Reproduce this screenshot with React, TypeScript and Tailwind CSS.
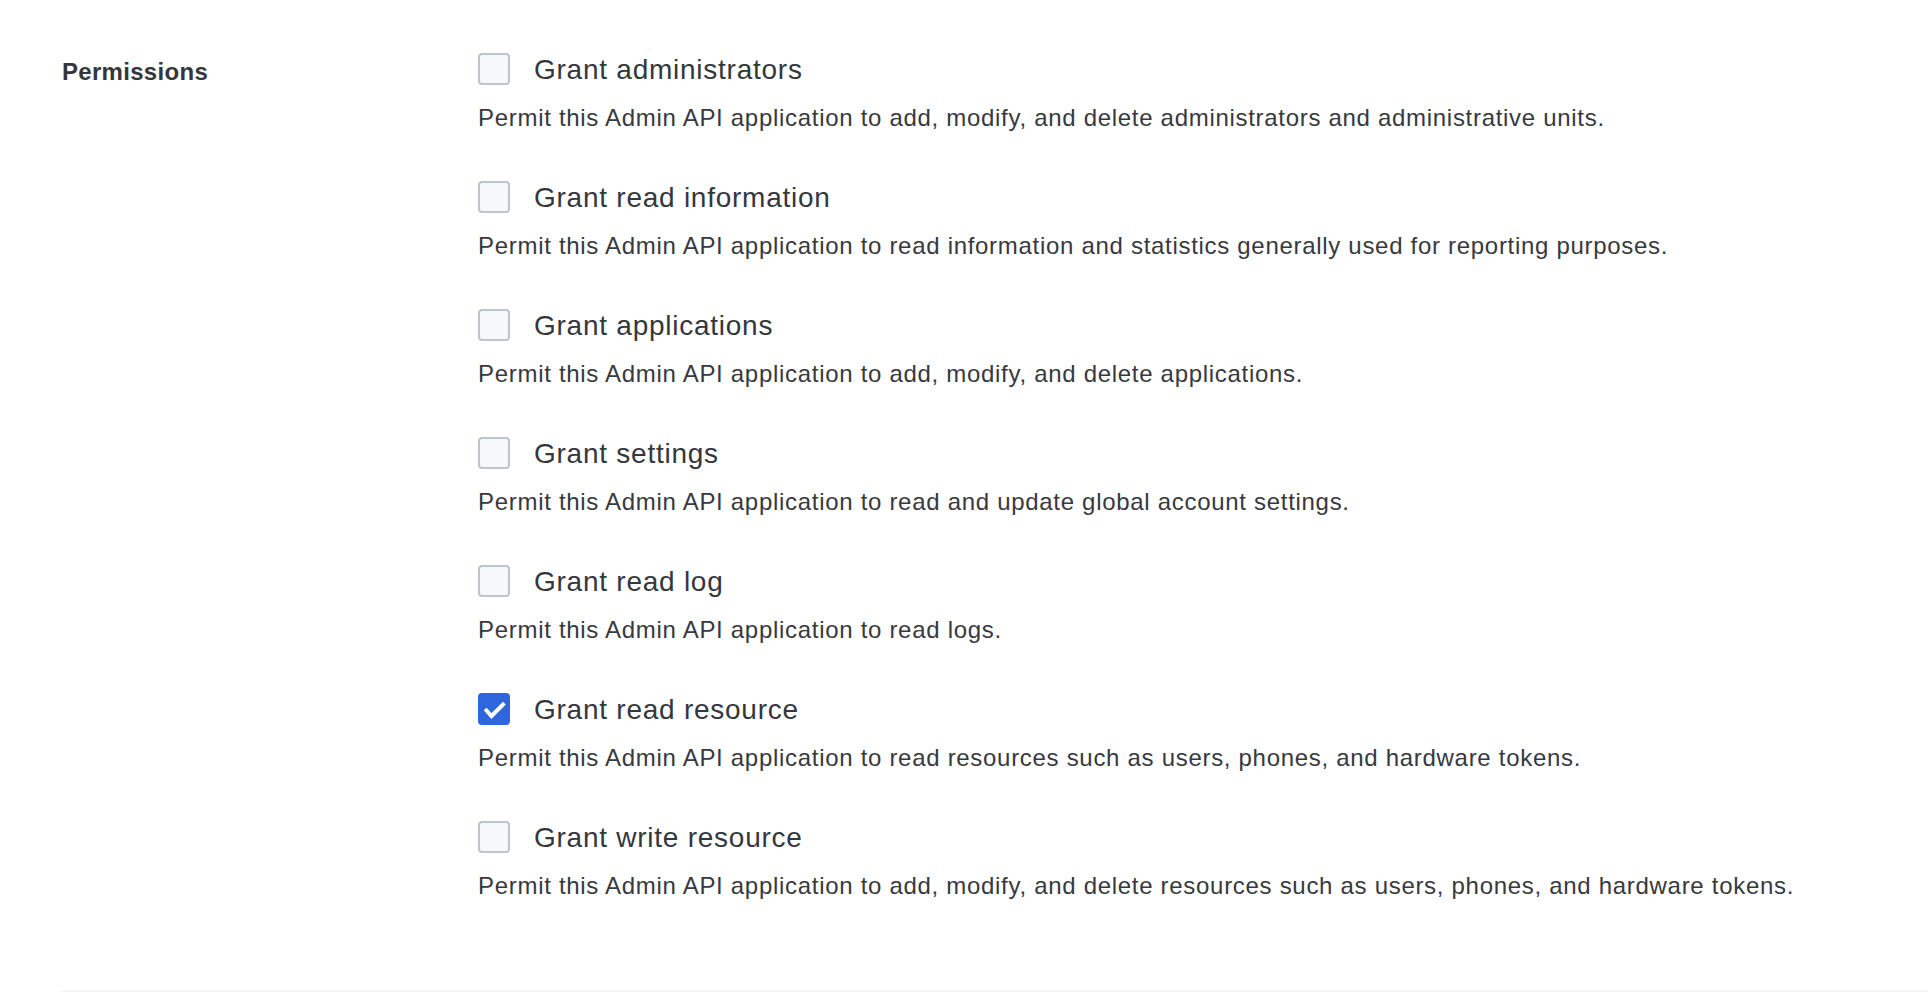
const permissions = [
  {
    label: 'Grant administrators',
    desc: 'Permit this Admin API application to add, modify, and delete administrators and administrative units.',
    checked: false,
  },
  {
    label: 'Grant read information',
    desc: 'Permit this Admin API application to read information and statistics generally used for reporting purposes.',
    checked: false,
  },
  {
    label: 'Grant applications',
    desc: 'Permit this Admin API application to add, modify, and delete applications.',
    checked: false,
  },
  {
    label: 'Grant settings',
    desc: 'Permit this Admin API application to read and update global account settings.',
    checked: false,
  },
  {
    label: 'Grant read log',
    desc: 'Permit this Admin API application to read logs.',
    checked: false,
  },
  {
    label: 'Grant read resource',
    desc: 'Permit this Admin API application to read resources such as users, phones, and hardware tokens.',
    checked: true,
  },
  {
    label: 'Grant write resource',
    desc: 'Permit this Admin API application to add, modify, and delete resources such as users, phones, and hardware tokens.',
    checked: false,
  },
]

function Checkbox({ checked }: { checked: boolean }) {
  if (checked) {
    return (
      <span className="block h-8 w-8 shrink-0 rounded-[4px] bg-[#2d66dd]">
        <svg width="32" height="32" viewBox="0 0 32 32" fill="none" stroke="#ffffff" strokeWidth="4" strokeLinecap="square" strokeLinejoin="miter">
          <path d="M8.5 17.5l5 5.5L25 11.5" />
        </svg>
      </span>
    )
  }
  return <span className="block h-8 w-8 shrink-0 rounded-[4px] border-2 border-[#bcc5cf] bg-[#f6f8fa]" />
}

export default function App() {
  return (
    <div className="min-h-[996px] bg-white pl-[62px] pt-[53px] text-[#34373c]" style={{ fontFamily: '"Liberation Sans", Arial, sans-serif' }}>
      <div className="flex">
        <div className="mt-[3px] w-[416px] shrink-0 text-[24px] font-bold leading-8 tracking-[0.3px] text-[#33373b]">Permissions</div>
        <div className="flex flex-col gap-[47px]">
          {permissions.map((p) => (
            <div key={p.label}>
              <label className="flex h-8 items-start gap-6">
                <Checkbox checked={p.checked} />
                <span className="mt-[1px] text-[28px] leading-8 tracking-[0.75px]">{p.label}</span>
              </label>
              <p className="mt-[17px] text-[24px] leading-8 tracking-[0.7px] text-[#37393e]">{p.desc}</p>
            </div>
          ))}
        </div>
      </div>
      <div className="mt-[88px] border-t-2 border-[#f3f4f5]" />
    </div>
  )
}
